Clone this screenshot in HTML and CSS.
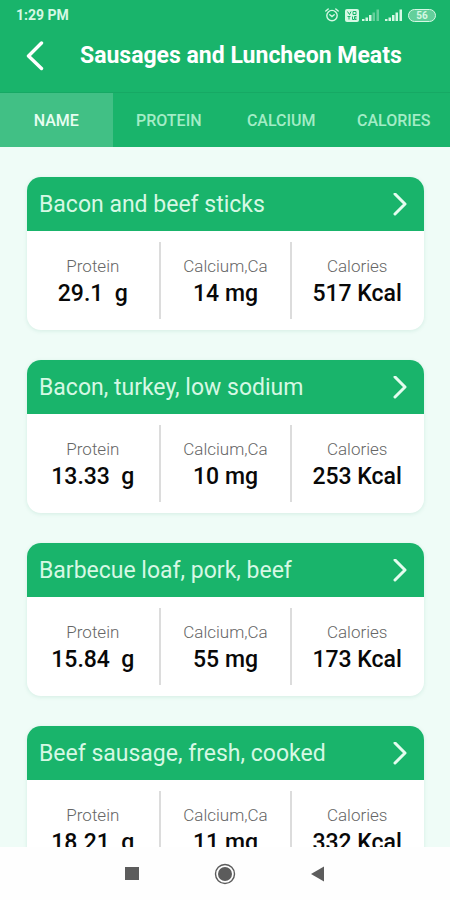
FILE: index.html
```html
<!DOCTYPE html>
<html lang="en">
<head>
<meta charset="utf-8">
<meta name="viewport" content="width=device-width, initial-scale=1">
<title>Sausages and Luncheon Meats</title>
<link rel="stylesheet" href="styles.css">
</head>
<body>
<div class="status">
  <span class="clock">1:29 PM</span>
  <div class="status-icons">
    <svg width="14" height="14" viewBox="0 0 14 14" fill="none" stroke="currentColor" stroke-width="1.4" stroke-linecap="round"><circle cx="7" cy="7.6" r="5.2"/><path d="M.8 3 3.2 1M13.2 3 10.800 1M4.800 6.800 7 8.600 9.200 6.800"/></svg>
    <svg class="volte" width="14" height="13" viewBox="0 0 14 13"><rect width="14" height="13" rx="2" fill="currentColor"/><path d="M2.500 2.500 4.500 5.500 6 2.500M8 2.500h3v3H8zM2.500 7.500h3M4 7.500v3M7.500 7.500v3h1.500M11.500 7.500h-2v3h2M9.500 9h2" fill="none" stroke="#19b46b" stroke-width="1"/></svg>
    <svg class="signal" width="17" height="12" viewBox="0 0 17 12" fill="currentColor"><path d="M0 10h2.500v2H0zM3.500 8.500H6V12H3.500zM7 6h2.500v6H7z"/><path d="M10.500 3.500H13V12h-2.500zM14.500 0.500H17V12h-2.500z" opacity=".4"/></svg>
    <svg class="signal-full" width="17" height="12" viewBox="0 0 17 12" fill="currentColor"><path d="M0 10h2.500v2H0zM3.500 8.500H6V12H3.500zM7 6h2.500v6H7zM10.500 3.500H13V12h-2.500zM14.500 0.500H17V12h-2.500z"/></svg>
    <span class="battery">56</span>
  </div>
</div>
<header class="topbar">
  <button class="back" aria-label="Back"><svg width="18" height="30" viewBox="0 0 18 30" fill="none" stroke="currentColor" stroke-width="3.4" stroke-linecap="round" stroke-linejoin="round"><path d="M15.500 2 2.500 15 15.500 27.500"/></svg></button>
  <h1>Sausages and Luncheon Meats</h1>
</header>
<nav class="tabs">
  <button class="tab active">NAME</button>
  <button class="tab">PROTEIN</button>
  <button class="tab">CALCIUM</button>
  <button class="tab">CALORIES</button>
</nav>
<main class="list">
  <article class="card">
    <a class="card-title" href="#"><span>Bacon and beef sticks</span><svg class="chevron" width="14" height="24" viewBox="0 0 14 24"><path d="M2 1 12 11 2 21"/></svg></a>
    <dl class="facts">
      <div><dt>Protein</dt><dd>29.1&nbsp; g</dd></div>
      <div><dt>Calcium,Ca</dt><dd>14 mg</dd></div>
      <div><dt>Calories</dt><dd>517 Kcal</dd></div>
    </dl>
  </article>
  <article class="card">
    <a class="card-title" href="#"><span>Bacon, turkey, low sodium</span><svg class="chevron" width="14" height="24" viewBox="0 0 14 24"><path d="M2 1 12 11 2 21"/></svg></a>
    <dl class="facts">
      <div><dt>Protein</dt><dd>13.33&nbsp; g</dd></div>
      <div><dt>Calcium,Ca</dt><dd>10 mg</dd></div>
      <div><dt>Calories</dt><dd>253 Kcal</dd></div>
    </dl>
  </article>
  <article class="card">
    <a class="card-title" href="#"><span>Barbecue loaf, pork, beef</span><svg class="chevron" width="14" height="24" viewBox="0 0 14 24"><path d="M2 1 12 11 2 21"/></svg></a>
    <dl class="facts">
      <div><dt>Protein</dt><dd>15.84&nbsp; g</dd></div>
      <div><dt>Calcium,Ca</dt><dd>55 mg</dd></div>
      <div><dt>Calories</dt><dd>173 Kcal</dd></div>
    </dl>
  </article>
  <article class="card">
    <a class="card-title" href="#"><span>Beef sausage, fresh, cooked</span><svg class="chevron" width="14" height="24" viewBox="0 0 14 24"><path d="M2 1 12 11 2 21"/></svg></a>
    <dl class="facts">
      <div><dt>Protein</dt><dd>18.21&nbsp; g</dd></div>
      <div><dt>Calcium,Ca</dt><dd>11 mg</dd></div>
      <div><dt>Calories</dt><dd>332 Kcal</dd></div>
    </dl>
  </article>
</main>
<footer class="sysnav">
  <button aria-label="Recent apps"><svg width="22" height="22" viewBox="0 0 22 22"><path d="M4 4h14v13H4z" fill="#5c5c5c"/></svg></button>
  <button aria-label="Home"><svg width="22" height="22" viewBox="0 0 22 22"><circle cx="11" cy="11" r="9.500" fill="none" stroke="#5c5c5c" stroke-width="1.400"/><circle cx="11" cy="11" r="7" fill="#5c5c5c"/></svg></button>
  <button aria-label="Back"><svg width="22" height="22" viewBox="0 0 22 22"><path d="M4 11 17 3.500v15z" fill="#5c5c5c"/></svg></button>
</footer>
</body>
</html>
```
FILE: styles.css
```css
* {
  box-sizing: border-box;
}

body {
  margin: 0;
  height: 100vh;
  display: flex;
  flex-direction: column;
  font-family: Roboto, "Liberation Sans", sans-serif;
  background: #effcf7;
}

button {
  border: 0;
  padding: 0;
  background: none;
  color: inherit;
  font: inherit;
}

svg {
  display: block;
}

.status {
  flex: none;
  height: 30px;
  padding: 0 14px 0 16px;
  display: flex;
  align-items: center;
  justify-content: space-between;
  background: #19b46b;
  color: #d6f8e4;
}

.clock {
  font-size: 14px;
  font-weight: 700;
}

.status-icons {
  display: flex;
  align-items: center;
}

.volte {
  margin-left: 6px;
}

.signal {
  margin-left: 3px;
}

.signal-full {
  margin: 0 6px;
}

.battery {
  width: 28px;
  height: 13px;
  border: 1px solid currentColor;
  border-radius: 7px;
  background: #63cf9b;
  font-size: 10px;
  line-height: 11px;
  font-weight: 700;
  text-align: center;
}

.topbar {
  flex: none;
  height: 63px;
  padding: 0 26px 10px;
  display: flex;
  align-items: center;
  gap: 36px;
  background: #19b46b;
  border-bottom: 1px solid #16a964;
  color: #fff;
}

h1 {
  margin: 0;
  font-size: 23px;
  line-height: 28px;
  font-weight: 700;
  white-space: nowrap;
}

.tabs {
  flex: none;
  display: grid;
  grid-template-columns: repeat(4, 1fr);
  height: 54px;
  background: #19b46b;
  color: #a3ecc6;
  font-size: 16px;
  font-weight: 500;
}

.active {
  background: #41c085;
  color: #e8fdf1;
}

.list {
  flex: 1;
  min-height: 0;
  padding: 30px 26px 30px 27px;
  display: flex;
  flex-direction: column;
  gap: 30px;
  overflow-y: auto;
  scrollbar-width: none;
}

.card {
  flex: none;
  border-radius: 14px;
  overflow: hidden;
  background: #fff;
  box-shadow: 0 1px 4px rgba(20, 130, 90, 0.12);
}

.card-title {
  height: 54px;
  padding: 1px 17px 0 12px;
  display: flex;
  align-items: center;
  justify-content: space-between;
  background: #19b46b;
  color: #d6f8e4;
  font-size: 23px;
  text-decoration: none;
}

.chevron {
  fill: none;
  stroke: #e4fcef;
  stroke-width: 3;
  stroke-linecap: round;
  stroke-linejoin: round;
}

.facts {
  margin: 0;
  padding: 11px 2px 11px 0;
  display: grid;
  grid-template-columns: repeat(3, 1fr);
  text-align: center;
}

.facts div {
  height: 77px;
  padding-top: 12px;
}

.facts div + div {
  border-left: 2px solid #dcdcdc;
}

dt {
  font-size: 17px;
  line-height: 24px;
  font-weight: 300;
  color: #666;
}

dd {
  margin: 0;
  font-size: 23px;
  line-height: 32px;
  font-weight: 500;
  color: #080808;
}

.sysnav {
  flex: none;
  height: 53px;
  display: flex;
  align-items: center;
  justify-content: center;
  gap: 71px;
  background: #fefefe;
}
```
